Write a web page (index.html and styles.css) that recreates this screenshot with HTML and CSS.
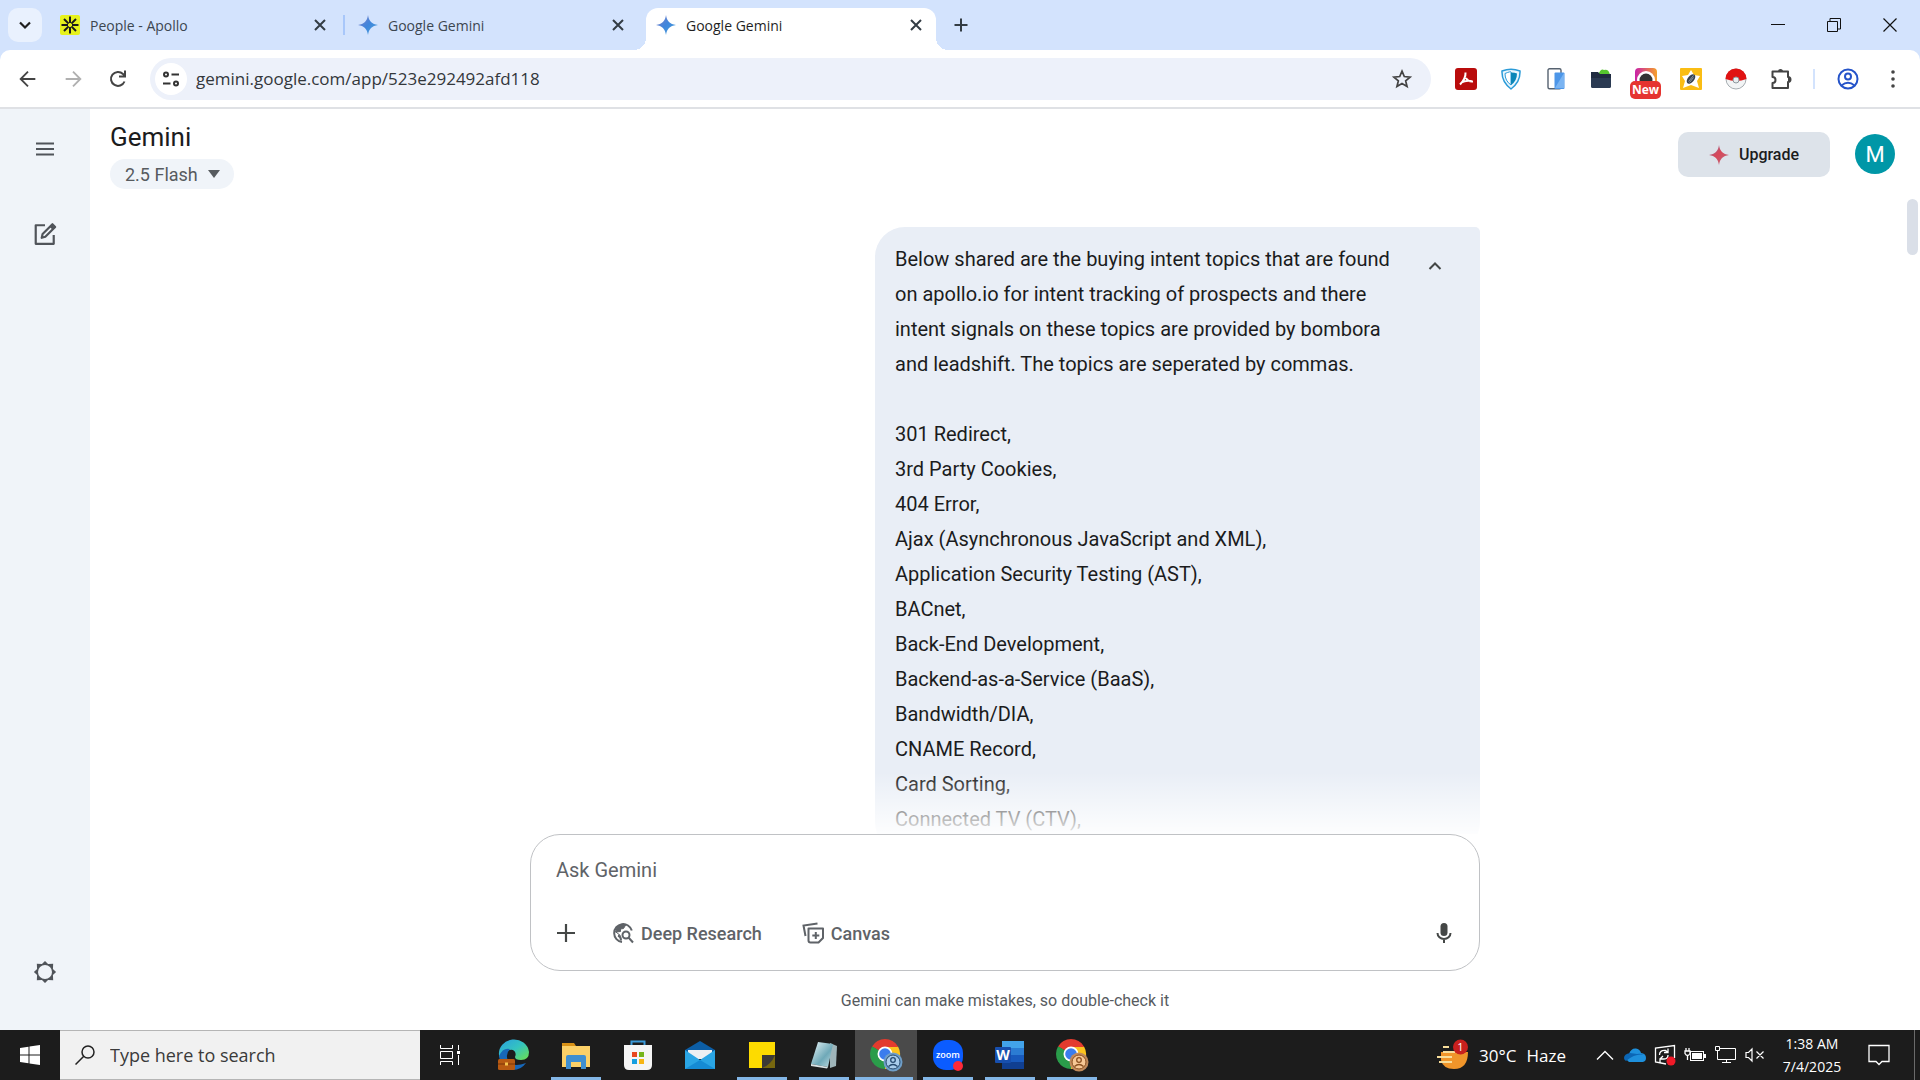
FILE: index.html
```html
<!DOCTYPE html>
<html lang="en">
<head>
<meta charset="utf-8">
<title>Google Gemini</title>
<link rel="stylesheet" href="styles.css">
</head>
<body>
<svg class="defs" aria-hidden="true">
  <defs>
    <linearGradient id="gem" x1="0" y1="0" x2="1" y2="1"><stop offset="0" stop-color="#8a7fc4"/><stop offset=".5" stop-color="#3f86dc"/><stop offset="1" stop-color="#4aa3d8"/></linearGradient>
    <linearGradient id="rose" x1="0" y1="0" x2="1" y2="1"><stop offset="0" stop-color="#7d6f9f"/><stop offset=".45" stop-color="#d9485a"/><stop offset="1" stop-color="#b56a7c"/></linearGradient>
    <linearGradient id="insta" x1="0" y1="0" x2="1" y2="0"><stop offset="0" stop-color="#c822a8"/><stop offset="1" stop-color="#f5a02a"/></linearGradient>
    <linearGradient id="edge" x1="0" y1="0" x2="1" y2="1"><stop offset="0" stop-color="#2a9ee0"/><stop offset=".5" stop-color="#34c4c0"/><stop offset="1" stop-color="#6ee04a"/></linearGradient>
    <linearGradient id="glass" x1="0" y1="0" x2="1" y2="1"><stop offset="0" stop-color="#eaf6f8"/><stop offset=".6" stop-color="#6fa9b8"/><stop offset="1" stop-color="#c4dde2"/></linearGradient>
    <symbol id="close" viewBox="0 0 20 20"><path d="M5 5l10 10M15 5L5 15" stroke="currentColor" stroke-width="2"/></symbol>
    <symbol id="spark" viewBox="0 0 20 20"><path d="M10 0C10.700 6 14 9.300 20 10C14 10.700 10.700 14 10 20C9.300 14 6 10.700 0 10C6 9.300 9.300 6 10 0Z"/></symbol>
    <symbol id="chrome" viewBox="0 0 32 32">
      <path d="M16 16L3.010 8.500A15 15 0 0 1 28.990 8.500Z" fill="#e33b2e"/>
      <path d="M16 16L29 8.500A15 15 0 0 1 16 31Z" fill="#fcc31e"/>
      <path d="M16 16V31A15 15 0 0 1 3.010 8.500Z" fill="#2a9c4a"/>
      <path d="M16 9H29.200L22 20Z" fill="#fcc31e"/><path d="M3 8.500L10 20L16 16Z" fill="#2a9c4a"/><path d="M4 7.200L10 12L16 9H29L26 5L16 2Z" fill="#e33b2e"/>
      <circle cx="16" cy="16" r="7.500" fill="#fff"/><circle cx="16" cy="16" r="5.800" fill="#3b7ded"/>
    </symbol>
  </defs>
</svg>

<header class="browser">
  <div class="tabstrip">
    <button class="tab-search" aria-label="Search tabs"><svg viewBox="0 0 20 20" width="20" height="20"><path d="M5 7.500l5 5 5-5" fill="none" stroke="currentColor" stroke-width="2.200"/></svg></button>
    <div class="tab">
      <svg viewBox="0 0 20 20" width="20" height="20"><rect width="20" height="20" rx="2" fill="#e6f21c"/><path d="M10 1.500V8M10 12v6.500M1.500 10H8M12 10h6.500M4 4l4.600 4.600M11.400 11.400L16 16M16 4l-4.600 4.600M8.600 11.400L4 16" stroke="#1b1b1b" stroke-width="2"/></svg>
      <span class="tab-title">People - Apollo</span>
      <button class="tab-close" aria-label="Close tab"><svg width="20" height="20"><use href="#close"/></svg></button>
    </div>
    <div class="tab tab-divided">
      <svg width="18" height="20" fill="url(#gem)"><use href="#spark"/></svg>
      <span class="tab-title">Google Gemini</span>
      <button class="tab-close" aria-label="Close tab"><svg width="20" height="20"><use href="#close"/></svg></button>
    </div>
    <div class="tab tab-active">
      <svg width="18" height="20" fill="url(#gem)"><use href="#spark"/></svg>
      <span class="tab-title">Google Gemini</span>
      <button class="tab-close" aria-label="Close tab"><svg width="20" height="20"><use href="#close"/></svg></button>
    </div>
    <button class="new-tab" aria-label="New tab"><svg viewBox="0 0 20 20" width="20" height="20"><path d="M10 3.500v13M3.500 10h13" stroke="currentColor" stroke-width="2"/></svg></button>
    <div class="window-controls">
      <button aria-label="Minimize"><svg viewBox="0 0 14 14" width="14" height="14"><path d="M0 6.500h14" stroke="currentColor"/></svg></button>
      <button aria-label="Restore"><svg viewBox="0 0 14 14" width="14" height="14" fill="none" stroke="currentColor"><path d="M.5 3.500h10v10H.5zM3 3V.5h10.500V11H11"/></svg></button>
      <button aria-label="Close"><svg viewBox="0 0 14 14" width="14" height="14"><path d="M.5.5l13 13M13.500.5l-13 13" stroke="currentColor" stroke-width="1.200"/></svg></button>
    </div>
  </div>

  <div class="toolbar">
    <button class="tool" aria-label="Back"><svg viewBox="0 0 24 24" width="22" height="22"><path d="M20 12H4M12 4l-8 8 8 8" fill="none" stroke="currentColor" stroke-width="2"/></svg></button>
    <button class="tool tool-off" aria-label="Forward"><svg viewBox="0 0 24 24" width="22" height="22"><path d="M4 12h16M12 4l8 8-8 8" fill="none" stroke="currentColor" stroke-width="2"/></svg></button>
    <button class="tool" aria-label="Reload"><svg viewBox="0 0 24 24" width="24" height="24"><path d="M18.500 14.500A7 7 0 1 1 17 7l2 2M19 3.500V9.500H13" fill="none" stroke="currentColor" stroke-width="2"/></svg></button>
    <div class="omnibox">
      <button class="site-info" aria-label="Site information"><svg viewBox="0 0 20 20" width="20" height="20" fill="none" stroke="currentColor" stroke-width="2"><circle cx="5" cy="5.500" r="2"/><path d="M10.500 5.500H18M2 14.500h7.500"/><circle cx="15" cy="14.500" r="2"/></svg></button>
      <input class="address" type="text" aria-label="Address" value="gemini.google.com/app/523e292492afd118">
      <button class="bookmark" aria-label="Bookmark"><svg viewBox="0 0 24 24" width="22" height="22"><path d="M12 3.500l2.500 5.800 6.300.6-4.800 4.100 1.500 6.200L12 16.900l-5.500 3.300L8 14 3.200 9.900l6.300-.6z" fill="none" stroke="currentColor" stroke-width="1.900"/></svg></button>
    </div>
    <button class="tool" aria-label="Acrobat"><svg viewBox="0 0 22 22" width="22" height="22"><rect width="22" height="22" rx="3" fill="#b90c0c"/><path d="M10.500 4.500q.5 6-5.500 12M11 10q2 4 7 3.500M6.500 14.500q4-2.500 10-1.500" fill="none" stroke="#fff" stroke-width="2"/></svg></button>
    <button class="tool" aria-label="Shield"><svg viewBox="0 0 22 22" width="22" height="22"><path d="M2 3Q11-.5 20 3Q20.500 14 11 21Q1.500 14 2 3Z" fill="#e9f6fd" stroke="#2a9bd8" stroke-width="1.500"/><path d="M5 5.500Q11 3 11 4V17Q5 13 5 5.500Z" fill="#fff" stroke="#2a9bd8"/><path d="M11 4.500Q15 4.500 17 5.500Q17 13 11 17Z" fill="#0b86b8"/></svg></button>
    <button class="tool" aria-label="Devices"><svg viewBox="0 0 22 22" width="22" height="22"><rect x="3" y=".8" width="13" height="20" rx="1.500" fill="#fff" stroke="#566270" stroke-width="1.400"/><rect x="9.500" y="4.500" width="10" height="16.500" rx="1" fill="#4d96e8"/><path d="M10 20L19 5v15z" fill="#7ab4f2"/></svg></button>
    <button class="tool" aria-label="Folder"><svg viewBox="0 0 22 22" width="22" height="22"><path d="M8 7q3-7 6-5 5-1 6 5z" fill="#56c62e"/><path d="M1 4h7l2 2h11v12q0 2-2 2H3q-2 0-2-2z" fill="#1f2b40"/><path d="M1 10h20v8q0 2-2 2H3q-2 0-2-2z" fill="#2a3a52"/></svg></button>
    <button class="tool tool-badged" aria-label="Media saver"><svg viewBox="0 0 22 22" width="22" height="22"><rect width="22" height="22" rx="4" fill="url(#insta)"/><circle cx="11" cy="12" r="9" fill="#fff"/><circle cx="11" cy="12" r="6.500" fill="#333"/></svg><span class="new-badge">New</span></button>
    <button class="tool" aria-label="Clipper"><svg viewBox="0 0 22 22" width="22" height="22"><rect width="22" height="22" rx="1" fill="#fabd14"/><path d="M11 2l3 5 6 1-3 5 2 7-8-3-8 3 2-7-3-5 6-1z" fill="#fff"/><ellipse cx="11" cy="11" rx="3.200" ry="5.500" transform="rotate(40 11 11)" fill="#35414f"/><path d="M8.500 13.500l5-6M9.500 14.500l4-5" stroke="#aab4be" stroke-width=".8"/></svg></button>
    <button class="tool" aria-label="Catcher"><svg viewBox="0 0 22 22" width="22" height="22"><circle cx="11" cy="11" r="10" fill="#f2f4f5" stroke="#a6adb1"/><path d="M.5 11a10.500 10.500 0 0 1 21 0q-10 4-21 0z" fill="#e01212"/><circle cx="11" cy="12" r="3" fill="#e8ecee" stroke="#8c979d"/></svg></button>
    <button class="tool" aria-label="Extensions"><svg viewBox="0 0 22 22" width="22" height="22"><path d="M2.500 3.500h15.500V9a2.500 2.500 0 0 1 0 5v6H2.500v-5a3 3 0 0 0 0-6z" fill="none" stroke="currentColor" stroke-width="2" stroke-linejoin="round"/><path d="M8 3.500a2.500 2.500 0 0 1 5 0zM18 9a2.500 2.500 0 0 1 0 5z" fill="currentColor"/></svg></button>
    <span class="tool-sep"></span>
    <button class="tool tool-profile" aria-label="Profile"><svg viewBox="0 0 22 22" width="22" height="22" fill="none" stroke="currentColor" stroke-width="2"><circle cx="11" cy="11" r="9.500"/><circle cx="11" cy="8.500" r="3"/><path d="M4.500 17.500q6.500-5.500 13 0"/></svg></button>
    <button class="tool" aria-label="Menu"><svg viewBox="0 0 22 22" width="22" height="22" fill="currentColor"><circle cx="11" cy="4" r="1.800"/><circle cx="11" cy="11" r="1.800"/><circle cx="11" cy="18" r="1.800"/></svg></button>
  </div>
</header>

<div class="app">
  <nav class="rail" aria-label="Sidebar">
    <button aria-label="Main menu"><svg viewBox="0 0 24 24" width="24" height="24"><path d="M3 6.500h18M3 12h18M3 17.500h18" stroke="currentColor" stroke-width="2.200"/></svg></button>
    <button aria-label="New chat"><svg viewBox="0 0 22 22" width="24" height="24" fill="none" stroke="currentColor" stroke-width="2" stroke-linejoin="round"><path d="M11 3H2.500v17H19v-8"/><path d="M8 14.500l.8-3.500 9-9 2.500 2.500-9 9z"/><path d="M16.500 3.500l2.500 2.500" stroke-width="3"/></svg></button>
    <button class="rail-settings" aria-label="Settings"><svg viewBox="0 0 24 24" width="28" height="28"><path d="M12 2.500l2.600 2.700 4.400-.2-.2 4.400 2.700 2.600-2.700 2.600.2 4.400-4.400-.2-2.600 2.700-2.600-2.700-4.400.2.200-4.400L2.500 12l2.700-2.600L5 5l4.400.2z" fill="currentColor"/><circle cx="12" cy="12" r="6" fill="#f0f4f9"/></svg></button>
  </nav>

  <main class="main">
    <div class="topbar">
      <div class="brand">
        <h1>Gemini</h1>
        <button class="model">2.5 Flash <svg viewBox="0 0 12 8" width="12" height="8"><path d="M0 0h12L6 8z" fill="currentColor"/></svg></button>
      </div>
      <div class="account">
        <button class="upgrade"><svg width="20" height="20" fill="url(#rose)"><use href="#spark"/></svg>Upgrade</button>
        <button class="avatar" aria-label="Account">M</button>
      </div>
    </div>

    <section class="chat" aria-label="Conversation">
      <div class="thread">
        <article class="bubble">
          <div class="prompt">
            <p>Below shared are the buying intent topics that are found<br>on apollo.io for intent tracking of prospects and there<br>intent signals on these topics are provided by bombora<br>and leadshift. The topics are seperated by commas.</p>
            <p>301 Redirect,<br>3rd Party Cookies,<br>404 Error,<br>Ajax (Asynchronous JavaScript and XML),<br>Application Security Testing (AST),<br>BACnet,<br>Back-End Development,<br>Backend-as-a-Service (BaaS),<br>Bandwidth/DIA,<br>CNAME Record,<br>Card Sorting,<br>Connected TV (CTV),</p>
          </div>
          <button class="collapse" aria-label="Collapse"><svg viewBox="0 0 20 20" width="20" height="20"><path d="M4.500 13l5.500-5.500 5.500 5.500" fill="none" stroke="currentColor" stroke-width="2"/></svg></button>
        </article>
      </div>
      <span class="scroll-thumb"></span>
    </section>

    <form class="composer">
      <input class="ask" type="text" placeholder="Ask Gemini" aria-label="Ask Gemini">
      <div class="composer-tools">
        <button type="button" class="plus" aria-label="Add"><svg viewBox="0 0 20 20" width="20" height="20"><path d="M10 1v18M1 10h18" stroke="currentColor" stroke-width="2.200"/></svg></button>
        <button type="button" class="mode"><svg viewBox="0 0 22 22" width="22" height="22" fill="none" stroke="currentColor" stroke-width="2"><path d="M10 20A9 9 0 1 1 19.800 8.500"/><path d="M2.500 9l6 4.500M5 5q4-3.500 9-2.500l-2.500 4-3 .5v2.500L4 10z" fill="currentColor" stroke-width="1"/><circle cx="14" cy="13" r="3.500"/><path d="M16.500 15.500l4.500 5"/><path d="M6 13.500q3 1 3 5"/></svg>Deep Research</button>
        <button type="button" class="mode"><svg viewBox="0 0 22 22" width="22" height="22" fill="none" stroke="currentColor" stroke-width="2"><path d="M3.500 14L1.500 3.500 15.500 1.500"/><path d="M6.500 6.500H21V16l-4.500 4.500h-8q-2 0-2-2z" stroke-linejoin="round"/><path d="M13.800 10v7M10.300 13.500h7"/></svg>Canvas</button>
        <button type="button" class="mic" aria-label="Use microphone"><svg viewBox="0 0 20 22" width="20" height="22"><rect x="6.500" y="1" width="7" height="13" rx="3.500" fill="currentColor"/><path d="M3.500 11a6.500 6 0 0 0 13 0M10 17v4" fill="none" stroke="currentColor" stroke-width="2"/></svg></button>
      </div>
    </form>
    <p class="disclaimer">Gemini can make mistakes, so double-check it</p>
  </main>
</div>

<footer class="taskbar">
  <button class="start" aria-label="Start"><svg viewBox="0 0 20 20" width="20" height="20"><path d="M0 3l8.500-1.200v7.700H0zM9.500 1.600L20 0v9.500H9.500zM0 10.500h8.500v7.700L0 17zM9.500 10.500H20V20L9.500 18.400z" fill="#fff"/></svg></button>
  <label class="search"><svg viewBox="0 0 20 20" width="20" height="20"><circle cx="13" cy="7" r="6" fill="none" stroke="#222" stroke-width="1.500"/><path d="M8.800 11.200L.5 19.500" stroke="#222" stroke-width="1.500"/></svg><input type="text" placeholder="Type here to search" aria-label="Type here to search"></label>
  <button class="start" aria-label="Task view"><svg viewBox="0 0 20 20" width="20" height="20" fill="none" stroke="#fff"><path d="M.5 0v3.500h12V0M.5 20v-3.500h12V20M.5 6.500h12v7H.5zM18.500 0v5M18.500 10v10"/><rect x="17.500" y="6.500" width="2" height="2" fill="#fff"/></svg></button>
  <div class="apps">
    <button aria-label="Edge"><svg viewBox="0 0 32 32" width="32" height="32"><path d="M1 16A15 14 0 0 1 31 13q0 8-8 8-6 0-6-3 2-5-2-7-6-2-9 9-5 0-5-4z" fill="url(#edge)"/><path d="M1 17q4-9 11-7-5 5-2 12 5 7 18 2-5 7-13 7-13-1-14-14z" fill="#1767b8"/><rect y="20" width="17" height="11" rx="1.500" fill="#b85a12"/><path d="M0 25h17" stroke="#7a3608"/><rect x="7" y="23.500" width="3" height="3" fill="#f6c34c"/></svg></button>
    <button class="running" aria-label="File Explorer"><svg viewBox="0 0 32 32" width="32" height="32"><path d="M2 4h12l2 3h-14z" fill="#d89116"/><path d="M2 7h28v21H2z" fill="#fbd067"/><path d="M6 30V18q0-2 2-2h16q2 0 2 2v12h-5v-7H11v7z" fill="#3f8fd0"/></svg></button>
    <button aria-label="Store"><svg viewBox="0 0 32 32" width="32" height="32"><path d="M9.500 8V2.500h13V8" fill="none" stroke="#3a99d8" stroke-width="2"/><path d="M2 6h28v20q0 5-5 5H7q-5 0-5-5z" fill="#f5f5f5"/><path d="M10 13h5v5h-5z" fill="#e8471f"/><path d="M17 13h5v5h-5z" fill="#76b51c"/><path d="M10 20h5v5h-5z" fill="#159fe0"/><path d="M17 20h5v5h-5z" fill="#f7b513"/></svg></button>
    <button aria-label="Mail"><svg viewBox="0 0 32 32" width="32" height="32"><path d="M1 11L16 2l15 9v6H1z" fill="#0c5ea6"/><path d="M4 11h24v9H4z" fill="#eef0f2"/><path d="M1 11l15 10 15-10v19H1z" fill="#2aa5e4"/><path d="M1 30l15-9 15 9z" fill="#158bd4"/></svg></button>
    <button class="running" aria-label="Sticky Notes"><svg viewBox="0 0 32 32" width="32" height="32"><path d="M3 3h26v26H3z" fill="#fddb00"/><path d="M16 16h13v13H16z" fill="#3c3a36"/><path d="M29 16v13H16q9-3 13-13z" fill="#77670f"/></svg></button>
    <button class="running" aria-label="Notepad"><svg viewBox="0 0 32 32" width="32" height="32"><path d="M22 4l7 3-1 20-6 2z" fill="#9fb5ba"/><path d="M10 3l15 2-5 23L3 25z" fill="url(#glass)"/><path d="M3 25l17 3-1 1.500L3 27z" fill="#d9e2e4"/></svg></button>
    <button class="running current" aria-label="Chrome, work profile"><svg viewBox="0 0 34 34" width="34" height="34"><use href="#chrome" width="32" height="32"/><circle cx="24" cy="24" r="9.500" fill="#6f9fc9"/><circle cx="24" cy="24" r="7" fill="#a9cdec" stroke="#264b70"/><circle cx="24" cy="22" r="2.300" fill="none" stroke="#264b70" stroke-width="1.300"/><path d="M19.500 28.500q4.500-4 9 0" fill="none" stroke="#264b70" stroke-width="1.300"/></svg></button>
    <button class="running" aria-label="Zoom"><svg viewBox="0 0 32 34" width="32" height="34"><rect x="1" y="2" width="30" height="30" rx="13" fill="#0b5cff"/><text x="16" y="20" class="zoom-word" text-anchor="middle">zoom</text><circle cx="26" cy="28" r="5" fill="#ff2a3a"/></svg></button>
    <button class="running" aria-label="Word"><svg viewBox="0 0 32 32" width="32" height="32"><path d="M8 2h22v7H8z" fill="#42a3ea"/><path d="M8 9h22v7H8z" fill="#2b7cd3"/><path d="M8 16h22v7H8z" fill="#185abd"/><path d="M8 23h22v7H8z" fill="#103f91"/><rect x="1" y="8" width="16" height="16" rx="1" fill="#174fae"/><text x="9" y="21" class="word-letter" text-anchor="middle">W</text></svg></button>
    <button class="running" aria-label="Chrome, personal profile"><svg viewBox="0 0 34 34" width="34" height="34"><use href="#chrome" width="32" height="32"/><circle cx="24" cy="24" r="9.500" fill="#c08a5c"/><circle cx="24" cy="24" r="7" fill="#f7c795" stroke="#8a4f20"/><circle cx="24" cy="22" r="2.300" fill="none" stroke="#8a4f20" stroke-width="1.300"/><path d="M19.500 28.500q4.500-4 9 0" fill="none" stroke="#8a4f20" stroke-width="1.300"/></svg></button>
  </div>
  <div class="tray">
    <button class="weather"><svg viewBox="0 0 32 32" width="32" height="32"><path d="M4 13h27q0 17-14 17Q6 30 4 21z" fill="#f0952a"/><path d="M6 8h6M6 13h12M0 18h15M2 23h13" stroke="#f7dd9a" stroke-width="2"/><circle cx="23.500" cy="8" r="7.500" fill="#c8201e"/><text x="23.500" y="12" class="alert-count" text-anchor="middle">1</text></svg><span>30°C</span><span>Haze</span></button>
    <button class="tray-icon" aria-label="Show hidden icons"><svg viewBox="0 0 18 10" width="18" height="10"><path d="M1 9.500l8-8 8 8" fill="none" stroke="#fff" stroke-width="1.400"/></svg></button>
    <button class="tray-icon" aria-label="OneDrive"><svg viewBox="0 0 22 14" width="22" height="14"><path d="M5 14a5 4.500 0 0 1 0-8Q7 0 12 .5q4 .5 5 4.500 5 .5 5 5t-5 4z" fill="#1e90dc"/><path d="M2 13q10-8 18-6-4-2-7-1L6 5q-6 1-6 5 0 2 2 3z" fill="#0b66b5"/></svg></button>
    <button class="tray-icon" aria-label="Updates"><svg viewBox="0 0 22 22" width="22" height="22" fill="none" stroke="#fff" stroke-width="1.300"><path d="M12 20L1.500 18V4L20.500 1.500V14"/><path d="M5.500 11q0-5 6-4.500l2 1.500M14 4.500V8.500h-4M14 11q0 4-4 4H6v4M6 15l3-3"/><circle cx="17" cy="17" r="4.500" fill="#f01a28" stroke="none"/></svg></button>
    <button class="tray-icon" aria-label="Battery"><svg viewBox="0 0 22 16" width="22" height="16"><path d="M1 4h5v2.500q-1 2-2.500 2T1 6.500zM2 1v3M5 1v3M3.500 8v5" fill="none" stroke="#fff" stroke-width="1.300"/><rect x="6.500" y="4.500" width="13" height="9" fill="none" stroke="#fff"/><rect x="8" y="6" width="10" height="6" fill="#fff"/><path d="M21 7v4" stroke="#fff" stroke-width="2"/></svg></button>
    <button class="tray-icon" aria-label="Network"><svg viewBox="0 0 22 18" width="22" height="18" fill="none" stroke="#fff"><path d="M6 2.500h15.500v11H3.500V8M12.500 13.500v3M8 16.500h9M1.500.5h4v4h-4zM3.500 4.500V8"/></svg></button>
    <button class="tray-icon" aria-label="Volume muted"><svg viewBox="0 0 20 16" width="20" height="16" fill="none" stroke="#fff" stroke-width="1.200"><path d="M1 5.500h2.500L7 2v12l-3.500-3.500H1zM11.500 4.500l7 7M18.500 4.500l-7 7"/></svg></button>
    <button class="clock"><time datetime="2025-07-04T01:38">1:38 AM<br>7/4/2025</time></button>
    <button class="notices" aria-label="Notifications"><svg viewBox="0 0 22 22" width="22" height="22"><path d="M1 1.500h20v16h-7l-3 3-3-3H1z" fill="none" stroke="#fff" stroke-width="1.300"/></svg></button>
    <button class="show-desktop" aria-label="Show desktop"></button>
  </div>
</footer>
</body>
</html>
```
FILE: styles.css
```css
* { box-sizing: border-box; }

body {
  margin: 0;
  height: 100vh;
  display: flex;
  flex-direction: column;
  overflow: hidden;
  background: #fff;
  font-family: "Open Sans", "Noto Sans", sans-serif;
}

button, input {
  font: inherit;
  color: inherit;
  border: 0;
  padding: 0;
  background: none;
}

button {
  display: flex;
  align-items: center;
  justify-content: center;
}

svg { flex: none; }
h1, p { margin: 0; }
.defs { position: absolute; width: 0; height: 0; }

/* Browser window */
.browser { background: #d3e3fd; }

.tabstrip {
  display: flex;
  gap: 8px;
  height: 50px;
  padding-left: 8px;
  font-size: 14px;
  color: #3c4650;
}

.tab-search {
  width: 34px;
  height: 34px;
  margin-top: 8px;
  border-radius: 10px;
  background: #e9f1fe;
  color: #1f1f1f;
}

.tab {
  position: relative;
  display: flex;
  align-items: center;
  gap: 10px;
  width: 290px;
  height: 42px;
  margin-top: 8px;
  padding: 0 10px 8px;
}

.tab > svg { width: 20px; }
.tab-title { flex: 1; }
.tab-close { color: #333c44; }

.tab-divided::before {
  content: "";
  position: absolute;
  left: -5px;
  top: 7px;
  width: 2px;
  height: 20px;
  background: #a8c7fa;
}

.tab-active {
  border-radius: 12px 12px 0 0;
  background: #fff;
  color: #1f1f1f;
}

.tab-active::before, .tab-active::after {
  content: "";
  position: absolute;
  bottom: 0;
  width: 12px;
  height: 12px;
}
.tab-active::before { left: -12px; background: radial-gradient(circle at 0 0, transparent 12px, #fff 12px); }
.tab-active::after { right: -12px; background: radial-gradient(circle at 100% 0, transparent 12px, #fff 12px); }

.new-tab { width: 34px; height: 34px; margin-top: 8px; color: #333c44; }
.window-controls { display: flex; margin: 0 2px 0 auto; color: #111; }
.window-controls button { width: 56px; height: 50px; }

.toolbar {
  display: flex;
  align-items: center;
  height: 59px;
  padding: 0 5px;
  border-bottom: 2px solid #dfe1e5;
  border-radius: 10px 10px 0 0;
  background: #fff;
}

.tool { width: 45px; height: 40px; color: #444; }
.tool-off { color: #b0b0b0; }
.tool-profile { color: #2453c9; }
.tool-badged { position: relative; }
.tool-sep { width: 2px; height: 20px; margin: 0 10px; background: #d3e3fd; }

.new-badge {
  position: absolute;
  top: 22px;
  left: 7px;
  width: 31px;
  border-radius: 5px;
  background: #e53430;
  color: #fff;
  font-size: 12px;
  font-weight: 700;
  line-height: 18px;
  text-align: center;
}

.omnibox {
  flex: 1;
  display: flex;
  align-items: center;
  height: 42px;
  margin: 0 12px 0 10px;
  padding: 0 18px 0 5px;
  border-radius: 21px;
  background: #edf1fa;
}

.site-info { width: 32px; height: 32px; border-radius: 50%; background: #fff; color: #333; }
.address { flex: 1; margin-left: 9px; font-size: 17px; color: #33373b; }
.bookmark { color: #444; }

/* Gemini application */
.app {
  flex: 1;
  min-height: 0;
  display: flex;
  font-family: Roboto, "Liberation Sans", sans-serif;
  color: #1b1c1d;
}

.rail {
  display: flex;
  flex-direction: column;
  align-items: center;
  gap: 45px;
  width: 90px;
  padding: 20px 0 38px;
  background: #f0f4f9;
  color: #50545a;
}
.rail button { width: 40px; height: 40px; }
.rail-settings { margin-top: auto; }

.main { flex: 1; min-width: 0; display: flex; flex-direction: column; }

.topbar {
  display: flex;
  justify-content: space-between;
  height: 90px;
  padding: 10px 25px 0 20px;
}

.brand h1 { font-size: 26px; line-height: 36px; font-weight: 400; }

.model {
  gap: 10px;
  height: 30px;
  margin-top: 4px;
  padding: 0 14px 0 15px;
  border-radius: 15px;
  background: #f0f4f9;
  font-size: 18px;
  font-weight: 400;
  color: #575b5f;
}

.account { display: flex; gap: 25px; padding-top: 13px; }

.upgrade {
  gap: 10px;
  width: 152px;
  height: 45px;
  border-radius: 10px;
  background: #dde3ea;
  font-size: 16px;
  font-weight: 500;
}

.avatar {
  width: 40px;
  height: 40px;
  margin-top: 2px;
  border-radius: 50%;
  background: #0097a7;
  color: #fff;
  font-size: 22px;
}

.chat {
  position: relative;
  flex: 1;
  min-height: 0;
  overflow: hidden;
  padding-top: 28px;
}

.chat::after {
  content: "";
  position: absolute;
  inset: auto 0 0;
  height: 62px;
  background: linear-gradient(rgba(255, 255, 255, 0), rgba(255, 255, 255, .9));
}

.thread { display: flex; justify-content: flex-end; max-width: 950px; margin: 0 auto; }

.bubble {
  display: flex;
  align-items: flex-start;
  justify-content: space-between;
  width: 605px;
  padding: 15px 25px 15px 20px;
  border-radius: 30px 5px 30px 30px;
  background: #e9eef6;
}

.prompt { font-size: 20px; line-height: 35px; white-space: nowrap; }
.prompt p + p { margin-top: 35px; }
.collapse { width: 40px; height: 40px; margin-top: 4px; color: #444746; }

.scroll-thumb {
  position: absolute;
  top: 0;
  right: 2px;
  width: 11px;
  height: 56px;
  border-radius: 6px;
  background: #dadfe8;
}

.composer {
  width: 100%;
  max-width: 950px;
  height: 137px;
  margin: 0 auto;
  padding: 20px 25px 0;
  border: 1px solid #c0c2c5;
  border-radius: 30px;
  background: #fff;
  color: #5f6368;
}

.ask { display: block; width: 100%; height: 30px; font-size: 20px; }
input::placeholder { color: inherit; opacity: 1; }

.composer-tools { display: flex; align-items: center; height: 40px; margin-top: 28px; font-size: 18px; font-weight: 500; }
.plus { margin-right: 36px; color: #444746; }
.mode { gap: 7px; margin-right: 40px; }
.mic { margin-left: auto; color: #444746; }

.disclaimer {
  padding: 20px 0 19px;
  color: #575b5f;
  font-size: 16px;
  line-height: 20px;
  text-align: center;
}

/* Windows taskbar */
.taskbar { display: flex; height: 50px; background: #1c1c1c; color: #fff; }
.start { width: 60px; }

.search {
  display: flex;
  align-items: center;
  gap: 15px;
  width: 360px;
  padding-left: 15px;
  border: 1px solid #b5b5b5;
  border-width: 1px 0;
  background: #f1f1f1;
  color: #3a3a3a;
  font-size: 18px;
}
.search input { flex: 1; }

.apps { display: flex; padding-left: 3px; }
.apps button { position: relative; width: 62px; }
.apps .current { background: #4a4a4a; }

.running::after {
  content: "";
  position: absolute;
  left: 6px;
  right: 6px;
  bottom: 0;
  height: 3px;
  background: #83b6e6;
}
.current::after { left: 0; right: 4px; }

.zoom-word { fill: #fff; font: 600 9px "Open Sans", sans-serif; }
.word-letter { fill: #fff; font: 700 14px "Open Sans", sans-serif; }
.alert-count { fill: #fff; font: 11px "Open Sans", sans-serif; }

.tray { display: flex; margin-left: auto; }
.weather { gap: 10px; margin-right: 24px; font-size: 17px; }
.tray-icon { width: 30px; }
.clock { width: 84px; font-size: 14px; line-height: 23px; text-align: center; }
.notices { width: 50px; }
.show-desktop { width: 6px; margin-left: 10px; border-left: 1px solid #6a6a6a; }
```
